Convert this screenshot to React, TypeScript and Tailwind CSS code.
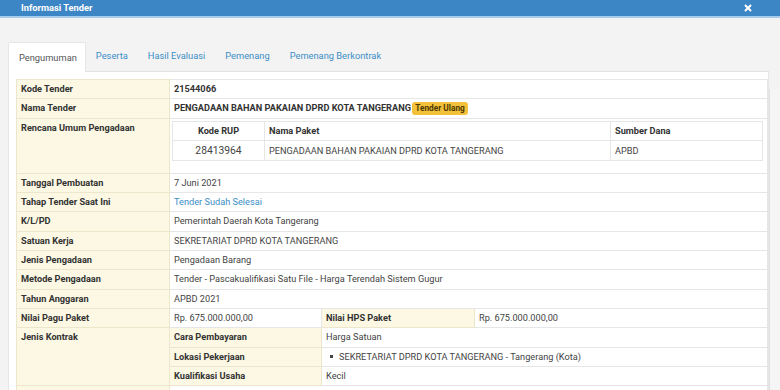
import { X } from "lucide-react";

const font = { fontFamily: "Roboto, 'Noto Sans', sans-serif" };

const tabs = ["Pengumuman", "Peserta", "Hasil Evaluasi", "Pemenang", "Pemenang Berkontrak"];

function Label({ children, rowSpan }: { children: React.ReactNode; rowSpan?: number }) {
  return (
    <td
      rowSpan={rowSpan}
      className="bg-[#fcf8e3] border border-[#ece6cc] px-[4px] py-[4px] leading-[10.3px] font-bold align-top text-[#333]"
    >
      {children}
    </td>
  );
}

function Val({ children, colSpan }: { children: React.ReactNode; colSpan?: number }) {
  return (
    <td
      colSpan={colSpan}
      className="bg-white border border-[#e6e6e6] px-[4px] py-[4px] leading-[10.3px] align-top text-[#444]"
    >
      {children}
    </td>
  );
}

export default function App() {
  return (
    <div style={font} className="w-[780px] h-[390px] overflow-hidden bg-[#f3f3f3] text-[9.2px]">
      {/* modal header */}
      <div className="h-[18px] bg-[#3d86c6] border-b-2 border-[#a8cdec] flex items-center justify-between pl-[21px] pr-[27px]">
        <span className="text-white font-bold text-[9.3px] leading-none">Informasi Tender</span>
        <X className="w-[10px] h-[10px] text-white" strokeWidth={4.5} />
      </div>

      <div className="flex">
        <div className="w-[769px] pl-[8px] pt-[24px]">
          {/* tabs */}
          <div className="flex items-end border-b border-[#e2e2e2] h-[30px]">
            {tabs.map((t, i) => (
              <div
                key={t}
                className={
                  i === 0
                    ? "h-[30px] pl-[10px] pr-[8px] flex items-center bg-white text-[#555] text-[9.3px] -mb-px border-t border-x border-[#e6e6e6] rounded-t-[2px]"
                    : "h-[30px] px-[10px] flex items-center text-[#3b8ec6] text-[9.3px]"
                }
              >
                {t}
              </div>
            ))}
          </div>

          {/* panel */}
          <div className="bg-white border-x border-[#e6e6e6] px-[7px] pt-[7px] pb-[8px] h-[330px]">
            <table className="w-[752px] border-collapse table-fixed">
              <colgroup>
                <col className="w-[153px]" />
                <col className="w-[152px]" />
                <col className="w-[153px]" />
                <col />
              </colgroup>
              <tbody>
                <tr>
                  <Label>Kode Tender</Label>
                  <Val colSpan={3}><span className="font-bold text-[#333]">21544066</span></Val>
                </tr>
                <tr>
                  <Label>Nama Tender</Label>
                  <Val colSpan={3}>
                    <span className="font-bold text-[#333]">PENGADAAN BAHAN PAKAIAN DPRD KOTA TANGERANG</span>{" "}
                    <span className="inline-block bg-[#f3c13a] text-[#4d3a00] font-bold text-[8.3px] leading-[13px] px-[3px] rounded-[3px] ml-[-1px] -my-[2px] align-[0px]">
                      Tender Ulang
                    </span>
                  </Val>
                </tr>
                <tr>
                  <Label>Rencana Umum Pengadaan</Label>
                  <td colSpan={3} className="bg-white border border-[#e6e6e6] pl-[2px] pr-[4px] pt-[2px] pb-[12px] align-top">
                    <table className="w-full border-collapse table-fixed">
                      <colgroup>
                        <col className="w-[92px]" />
                        <col className="w-[346px]" />
                        <col />
                      </colgroup>
                      <tbody>
                        <tr className="font-bold text-[#333]">
                          <td className="border border-[#e6e6e6] text-center px-[4px] py-[4px] leading-[10.3px]">Kode RUP</td>
                          <td className="border border-[#e6e6e6] px-[4px] py-[4px] leading-[10.3px]">Nama Paket</td>
                          <td className="border border-[#e6e6e6] px-[4px] py-[4px] leading-[10.3px]">Sumber Dana</td>
                        </tr>
                        <tr className="text-[#444]">
                          <td className="border border-[#e6e6e6] text-center px-[4px] py-[3px] leading-[13px] text-[10.3px]">28413964</td>
                          <td className="border border-[#e6e6e6] px-[4px] py-[3px] leading-[13px]">PENGADAAN BAHAN PAKAIAN DPRD KOTA TANGERANG</td>
                          <td className="border border-[#e6e6e6] px-[4px] py-[3px] leading-[13px]">APBD</td>
                        </tr>
                      </tbody>
                    </table>
                  </td>
                </tr>
                <tr>
                  <Label>Tanggal Pembuatan</Label>
                  <Val colSpan={3}>7 Juni 2021</Val>
                </tr>
                <tr>
                  <Label>Tahap Tender Saat Ini</Label>
                  <Val colSpan={3}><span className="text-[#3b8ec6]">Tender Sudah Selesai</span></Val>
                </tr>
                <tr>
                  <Label>K/L/PD</Label>
                  <Val colSpan={3}>Pemerintah Daerah Kota Tangerang</Val>
                </tr>
                <tr>
                  <Label>Satuan Kerja</Label>
                  <Val colSpan={3}>SEKRETARIAT DPRD KOTA TANGERANG</Val>
                </tr>
                <tr>
                  <Label>Jenis Pengadaan</Label>
                  <Val colSpan={3}>Pengadaan Barang</Val>
                </tr>
                <tr>
                  <Label>Metode Pengadaan</Label>
                  <Val colSpan={3}>Tender - Pascakualifikasi Satu File - Harga Terendah Sistem Gugur</Val>
                </tr>
                <tr>
                  <Label>Tahun Anggaran</Label>
                  <Val colSpan={3}>APBD 2021</Val>
                </tr>
                <tr>
                  <Label>Nilai Pagu Paket</Label>
                  <Val>Rp. 675.000.000,00</Val>
                  <Label>Nilai HPS Paket</Label>
                  <Val>Rp. 675.000.000,00</Val>
                </tr>
                <tr>
                  <Label rowSpan={3}>Jenis Kontrak</Label>
                  <Label>Cara Pembayaran</Label>
                  <Val colSpan={2}>Harga Satuan</Val>
                </tr>
                <tr>
                  <Label>Lokasi Pekerjaan</Label>
                  <Val colSpan={2}>
                    <span className="flex items-center">
                      <span className="inline-block w-[3px] h-[3px] bg-[#444] ml-[4px] mr-[6px]" />
                      SEKRETARIAT DPRD KOTA TANGERANG - Tangerang (Kota)
                    </span>
                  </Val>
                </tr>
                <tr>
                  <Label>Kualifikasi Usaha</Label>
                  <Val colSpan={2}>Kecil</Val>
                </tr>
                <tr>
                  <Label>&nbsp;</Label>
                  <Val colSpan={3}>&nbsp;</Val>
                </tr>
              </tbody>
            </table>
          </div>
        </div>
        <div className="flex-1 border-l border-[#e0e0e0] mt-[71px] bg-[#f5f5f5]" />
      </div>
    </div>
  );
}
